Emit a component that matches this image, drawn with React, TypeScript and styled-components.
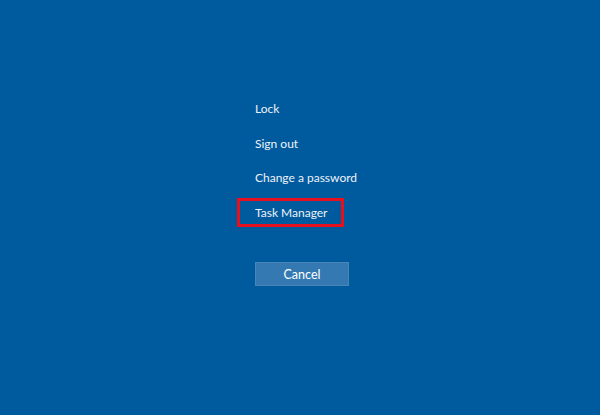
import React from 'react';
import styled, { createGlobalStyle } from 'styled-components';

const GlobalStyle = createGlobalStyle`
  html, body {
    margin: 0;
    padding: 0;
    background: #005a9e;
  }
  body {
    font-family: Lato, "Open Sans", sans-serif;
  }
`;

const Screen = styled.div`
  width: 600px;
  height: 415px;
  background: #005a9e;
  box-sizing: border-box;
  padding: 94px 0 0 255px;
  display: flex;
  flex-direction: column;
  align-items: flex-start;
`;

const Menu = styled.ul`
  list-style: none;
  margin: 0;
  padding: 0;
  display: flex;
  flex-direction: column;
  align-items: flex-start;
  gap: 5px;
`;

const MenuItem = styled.li<{ $selected?: boolean }>`
  height: 29.5px;
  box-sizing: border-box;
  margin-left: -18px;
  padding: 0 14px 0 15px;
  border: 3px solid ${(p) => (p.$selected ? '#e8101e' : 'transparent')};
  display: flex;
  align-items: center;
  color: #eef3f8;
  font-size: 12px;
  white-space: nowrap;
  cursor: pointer;
`;

const CancelButton = styled.button`
  margin-top: 35px;
  width: 94px;
  height: 24px;
  border: 1px solid rgba(255, 255, 255, 0.1);
  background: #3479b2;
  color: #ffffff;
  font-family: Lato, "Open Sans", sans-serif;
  font-size: 12.5px;
  padding: 0;
  cursor: pointer;
`;

const items = ['Lock', 'Sign out', 'Change a password', 'Task Manager'];

const App = () => {
  return (
    <>
      <GlobalStyle />
      <Screen>
        <Menu>
          {items.map((label) => (
            <MenuItem key={label} $selected={label === 'Task Manager'}>
              {label}
            </MenuItem>
          ))}
        </Menu>
        <CancelButton>Cancel</CancelButton>
      </Screen>
    </>
  );
};

export default App;
